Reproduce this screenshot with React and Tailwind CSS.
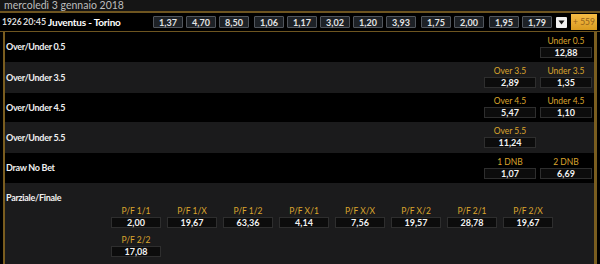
import { useState } from 'react';

// header odds, grouped as in the coupon (gap = extra space before a group)
const topOdds = [
  { v: '1,37' }, { v: '4,70' }, { v: '8,50' },
  { v: '1,06', gap: true }, { v: '1,17' }, { v: '3,02' }, { v: '1,20' }, { v: '3,93' },
  { v: '1,75', gap: true }, { v: '2,00' },
  { v: '1,95', gap: true }, { v: '1,79' },
];

const markets = [
  { name: 'Over/Under 0.5', h: 'h-[30px]', bg: 'bg-black', odds: [{ l: 'Under 0.5', v: '12,88' }] },
  { name: 'Over/Under 3.5', h: 'h-[31px]', bg: 'bg-[#1b1b1c]', odds: [{ l: 'Over 3.5', v: '2,89' }, { l: 'Under 3.5', v: '1,35' }] },
  { name: 'Over/Under 4.5', h: 'h-[29px]', bg: 'bg-black', odds: [{ l: 'Over 4.5', v: '5,47' }, { l: 'Under 4.5', v: '1,10' }] },
  { name: 'Over/Under 5.5', h: 'h-[31px]', bg: 'bg-[#1b1b1c]', odds: [{ l: 'Over 5.5', v: '11,24' }, null] },
  { name: 'Draw No Bet', h: 'h-[30px]', bg: 'bg-black', odds: [{ l: '1 DNB', v: '1,07' }, { l: '2 DNB', v: '6,69' }] },
];

const parziale = [
  ['P/F 1/1', '2,00'], ['P/F 1/X', '19,67'], ['P/F 1/2', '63,36'], ['P/F X/1', '4,14'],
  ['P/F X/X', '7,56'], ['P/F X/2', '19,57'], ['P/F 2/1', '28,78'], ['P/F 2/X', '19,67'],
  ['P/F 2/2', '17,08'],
];

function OddCell({ label, value, w = 'w-[52px]' }) {
  return (
    <div className={`${w} flex flex-col items-center`}>
      <div className="text-[8.5px] leading-[9px] text-[#dca52d] mb-[1px]">{label}</div>
      <div className="w-full h-[11px] bg-[#0c0c0c] border border-[#2e2e2e] flex items-center justify-center text-[9px] font-bold text-[#f2f2f2] leading-none">
        {value}
      </div>
    </div>
  );
}

export default function App() {
  const [open, setOpen] = useState(false);

  return (
    <div className="w-[600px] h-[264px] bg-black overflow-hidden flex flex-col" style={{ fontFamily: 'Lato, "Liberation Sans", sans-serif' }}>
      {/* date bar */}
      <div className="h-[13px] shrink-0 bg-[#151515] border-b-2 border-[#6e5520] pl-[4px] flex items-center text-[10.5px] text-[#bdbdbd] leading-none">
        mercoledì 3 gennaio 2018
      </div>

      {/* event row */}
      <div className="h-[19px] shrink-0 bg-black border-b border-[#6e5520] flex items-center pl-[2px] pr-[3px]">
        <span className="shrink-0 text-[8.5px] text-[#d8d8d8] font-bold w-[21px]">1926</span>
        <span className="shrink-0 text-[9px] text-[#d8d8d8] font-bold w-[25px]">20:45</span>
        <span className="shrink-0 text-[10px] text-white font-bold tracking-[-0.2px]">Juventus - Torino</span>
        <div className="ml-auto shrink-0 flex items-center gap-[3px]">
          {topOdds.map((o, i) => (
            <div
              key={i}
              className={`w-[30px] h-[12px] rounded-[1px] bg-[#1d2126] border border-[#50555c] flex items-center justify-center text-[9px] font-bold text-[#e4e4e4] leading-none ${o.gap ? 'ml-[2px]' : ''}`}
            >
              {o.v}
            </div>
          ))}
          <button
            onClick={() => setOpen(!open)}
            className="ml-[1px] w-[11px] h-[11px] bg-[#f0f0f0] rounded-[1px] flex items-center justify-center"
          >
            <svg width="7" height="5" viewBox="0 0 7 5">
              <path d="M0.5 0.5 L6.5 0.5 L3.5 4.5 Z" fill="#111" />
            </svg>
          </button>
          <div className="ml-[1px] w-[26px] h-[16px] bg-gradient-to-b from-[#f6bc45] to-[#d99b1e] flex items-center justify-center text-[8.5px] text-[#94621a] leading-none">
            + 559
          </div>
        </div>
      </div>

      {/* markets panel */}
      <div className="flex-1 mx-[3px] border-l-2 border-r-[3px] border-[#7a5d1f] flex flex-col">
        {markets.map((m) => (
          <div key={m.name} className={`${m.h} shrink-0 ${m.bg} flex items-center pl-[1px] pr-[2px]`}>
            <span className="text-[9px] font-bold text-[#f0f0f0] tracking-[-0.3px]">{m.name}</span>
            <div className="ml-auto flex gap-[4px]">
              {m.odds.map((o, i) =>
                o ? <OddCell key={i} label={o.l} value={o.v} /> : <div key={i} className="w-[52px]" />
              )}
            </div>
          </div>
        ))}

        <div className="flex-1 bg-[#1b1b1c] flex flex-col pl-[1px] pt-[9px]">
          <span className="text-[9px] font-bold text-[#f0f0f0] tracking-[-0.3px] leading-[12px]">Parziale/Finale</span>
          <div className="ml-[105px] mt-[3px] grid grid-cols-[repeat(8,50px)] gap-x-[6px] gap-y-[8px]">
            {parziale.map(([l, v]) => (
              <OddCell key={l} label={l} value={v} w="w-[50px]" />
            ))}
          </div>
        </div>
      </div>
    </div>
  );
}
